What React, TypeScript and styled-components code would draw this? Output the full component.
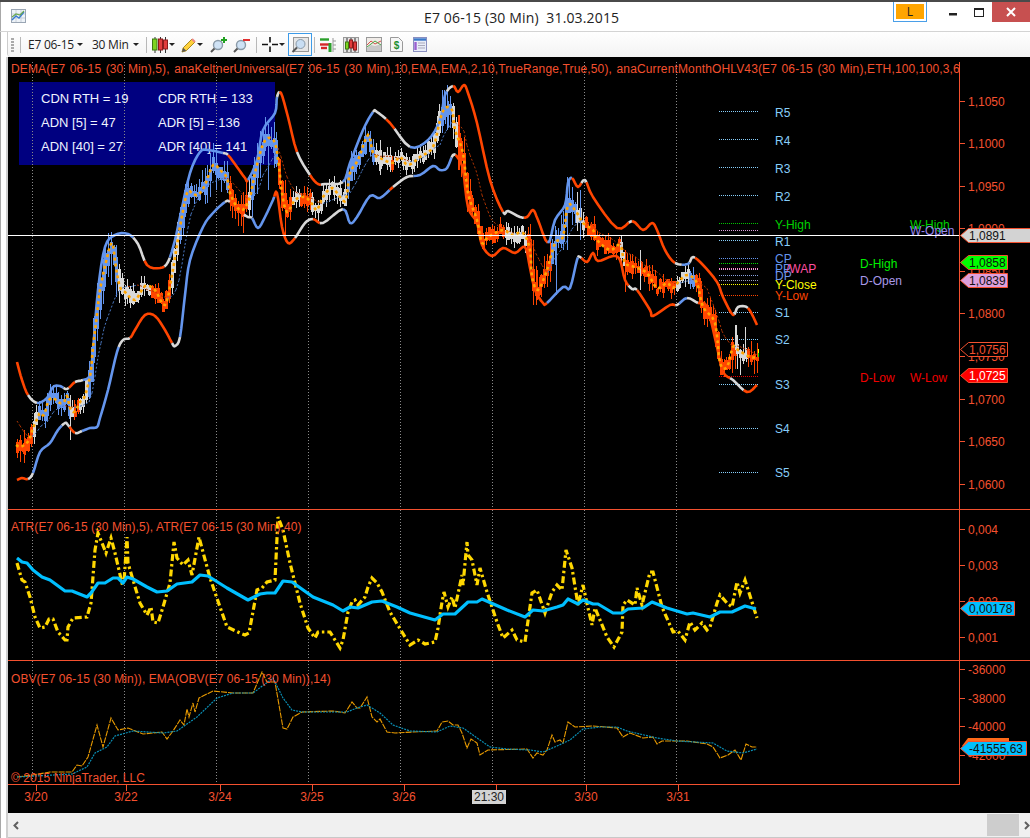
import React from "react";
import styled, { createGlobalStyle } from "styled-components";

type P = [number, number];
type C = "o" | "g" | "b";
const ORANGE = "#ff4500", BLUE = "#6495ed", GREY = "#d8d8d8";
const INK = "#f4512f";
const COL: Record<C, string> = { o: ORANGE, g: GREY, b: BLUE };

const dema: P[] = [[16,445],[20,447],[24,445],[29,440],[33,428],[38,417],[40,413],[44,415],[48,402],[52,398],[56,400],[60,403],[64,402],[67,396],[70,408],[73,412],[76,410],[80,402],[84,398],[88,385],[91,370],[93,347],[97,315],[100,290],[106,262],[112,243],[116,268],[120,287],[125,292],[135,300],[145,286],[155,290],[165,305],[172,275],[180,227],[187,193],[192,193],[198,195],[205,185],[213,165],[220,170],[227,178],[230,193],[237,207],[243,210],[250,197],[255,173],[262,147],[268,138],[275,143],[279,167],[282,193],[287,212],[295,200],[305,197],[313,205],[317,210],[323,197],[332,188],[340,197],[346,200],[350,173],[358,160],[368,135],[373,153],[380,158],[393,163],[400,157],[408,165],[420,157],[433,147],[440,120],[445,108],[452,110],[455,130],[463,153],[468,193],[477,220],[482,243],[488,237],[503,230],[512,235],[523,233],[530,250],[532,277],[538,290],[547,270],[555,243],[563,237],[568,205],[577,213],[583,223],[593,230],[597,240],[610,250],[620,245],[625,263],[635,267],[647,273],[657,288],[667,283],[673,288],[680,280],[688,275],[697,283],[703,307],[715,323],[720,363],[727,367],[733,347],[738,350],[750,357],[757,357]];
const upper: P[] = [[17,362],[22,380],[28,395],[37,403],[47,398],[53,387],[60,386],[67,389],[75,382],[83,380],[90,375],[93,350],[98,290],[105,247],[115,235],[128,234],[138,244],[147,265],[160,268],[168,262],[175,240],[180,217],[190,173],[200,152],[208,150],[223,153],[228,155],[237,167],[245,178],[248,180],[257,160],[263,130],[275,113],[277,97],[281,93],[288,117],[297,152],[310,175],[318,184],[325,184],[343,182],[350,163],[363,130],[373,112],[377,112],[390,123],[410,147],[428,140],[440,120],[445,95],[453,86],[458,92],[464,85],[468,93],[477,123],[490,180],[503,212],[508,211],[520,217],[527,217],[533,210],[538,220],[548,243],[555,220],[565,205],[568,183],[572,178],[578,187],[585,180],[593,197],[617,228],[632,221],[643,230],[652,223],[657,230],[665,250],[675,263],[688,264],[693,257],[703,265],[717,282],[723,297],[733,315],[738,307],[748,308],[757,325]];
const lower: P[] = [[17,480],[22,478],[28,479],[33,473],[40,452],[50,443],[58,430],[65,423],[68,425],[75,433],[82,431],[90,428],[97,427],[100,418],[108,390],[117,352],[123,340],[130,338],[135,330],[145,315],[155,316],[165,330],[172,343],[175,346],[180,337],[185,295],[190,260],[203,227],[213,213],[225,202],[230,202],[242,213],[248,217],[252,218],[258,228],[265,217],[273,200],[277,193],[282,227],[288,243],[295,238],[305,223],[313,219],[323,223],[343,209],[350,223],[357,217],[370,196],[380,198],[393,187],[407,177],[420,175],[433,166],[440,170],[447,168],[453,155],[458,158],[463,170],[468,207],[477,223],[482,245],[492,256],[503,248],[515,253],[525,247],[530,268],[535,290],[543,303],[547,303],[563,287],[570,288],[577,260],[580,257],[587,262],[593,253],[598,261],[613,256],[620,260],[625,280],[632,289],[637,290],[650,310],[653,316],[670,305],[677,305],[687,298],[698,303],[707,307],[717,347],[723,372],[733,380],[747,392],[757,385]];
const upCols: [number, C][] = [[29,"o"],[38,"g"],[65,"b"],[70,"g"],[75,"o"],[83,"g"],[135,"b"],[145,"g"],[165,"o"],[170,"g"],[223,"b"],[228,"g"],[248,"o"],[277,"b"],[280,"g"],[297,"o"],[312,"g"],[322,"o"],[343,"g"],[373,"b"],[388,"g"],[395,"o"],[410,"g"],[447,"b"],[453,"g"],[503,"o"],[525,"g"],[548,"o"],[573,"b"],[583,"o"],[587,"g"],[617,"o"],[620,"g"],[630,"o"],[634,"g"],[675,"o"],[685,"g"],[690,"b"],[697,"g"],[735,"o"],[750,"g"],[760,"o"]];
const loCols: [number, C][] = [[29,"o"],[34,"g"],[63,"b"],[70,"g"],[75,"o"],[82,"g"],[120,"b"],[130,"g"],[172,"o"],[180,"g"],[225,"b"],[232,"g"],[245,"o"],[252,"g"],[275,"b"],[295,"o"],[313,"g"],[320,"o"],[345,"g"],[392,"b"],[396,"o"],[415,"g"],[452,"b"],[456,"g"],[547,"o"],[578,"b"],[582,"g"],[630,"o"],[637,"g"],[676,"o"],[680,"g"],[687,"b"],[698,"g"],[732,"o"],[745,"g"],[760,"o"]];
const barCols: [number, C][] = [[31,"o"],[38,"g"],[70,"b"],[73,"g"],[78,"o"],[88,"g"],[118,"b"],[150,"g"],[170,"o"],[178,"g"],[227,"b"],[247,"o"],[250,"g"],[279,"b"],[292,"o"],[300,"g"],[310,"o"],[320,"g"],[346,"g"],[375,"b"],[390,"g"],[395,"o"],[440,"g"],[452,"b"],[456,"g"],[503,"o"],[525,"g"],[550,"o"],[575,"b"],[583,"g"],[620,"o"],[625,"g"],[675,"o"],[690,"g"],[695,"b"],[735,"o"],[748,"g"],[760,"o"]];
const atr: P[] = [[17,563],[22,580],[25,582],[30,597],[35,617],[40,628],[45,627],[49,619],[53,619],[58,632],[65,640],[67,640],[68,627],[73,618],[87,617],[91,603],[95,550],[98,533],[106,553],[111,538],[115,553],[122,583],[124,582],[127,537],[128,563],[133,580],[140,603],[147,615],[151,607],[153,622],[158,623],[163,607],[170,583],[174,542],[177,558],[183,565],[188,560],[192,575],[199,537],[203,552],[210,578],[220,607],[227,627],[240,633],[245,635],[249,633],[257,590],[262,588],[267,582],[275,580],[278,517],[283,530],[290,563],[300,603],[308,628],[315,638],[318,632],[330,632],[340,648],[343,640],[348,612],[352,602],[355,600],[358,605],[365,597],[368,587],[372,578],[377,583],[382,592],[390,612],[402,632],[410,645],[418,640],[425,644],[435,642],[438,628],[442,602],[444,592],[448,607],[452,597],[455,608],[462,575],[463,585],[467,542],[468,555],[472,560],[477,585],[480,568],[487,592],[497,622],[503,638],[512,630],[517,640],[525,642],[532,593],[537,590],[545,613],[552,592],[557,585],[562,590],[566,550],[572,568],[578,605],[583,585],[588,608],[592,625],[595,608],[607,637],[614,647],[622,632],[623,605],[627,600],[635,605],[637,588],[642,605],[650,572],[653,572],[662,607],[673,632],[678,631],[685,640],[690,622],[695,630],[702,623],[707,630],[710,627],[717,603],[720,595],[727,603],[732,607],[737,582],[740,593],[745,580],[752,602],[757,618]];
const atrAvg: P[] = [[17,558],[22,562],[27,563],[33,570],[42,577],[50,580],[65,591],[72,591],[87,597],[91,593],[98,583],[105,583],[113,578],[118,578],[123,583],[127,577],[133,579],[147,587],[157,592],[167,591],[177,584],[192,582],[200,575],[208,576],[227,588],[248,600],[260,594],[267,593],[275,593],[283,581],[292,582],[313,597],[333,605],[343,611],[350,607],[358,608],[372,602],[382,601],[397,607],[410,613],[435,620],[443,614],[455,614],[468,602],[477,602],[482,599],[507,610],[525,617],[533,610],[543,611],[557,607],[563,605],[568,599],[578,604],[583,600],[593,604],[598,604],[613,613],[622,613],[628,609],[643,608],[652,602],[667,608],[687,614],[693,613],[710,617],[720,612],[732,612],[745,606],[756,609]];
const obv: P[] = [[17,777],[33,775],[50,772],[72,772],[77,765],[82,766],[88,757],[97,725],[103,747],[111,718],[118,730],[128,728],[143,734],[162,732],[167,739],[173,731],[180,720],[184,725],[187,709],[189,717],[193,703],[195,712],[199,698],[213,691],[233,693],[253,693],[262,672],[267,682],[275,682],[283,728],[287,729],[293,717],[302,712],[333,711],[340,712],[345,713],[352,702],[357,708],[360,708],[367,697],[372,717],[377,722],[380,719],[387,732],[395,733],[413,732],[437,731],[442,722],[448,721],[453,725],[458,725],[462,733],[467,748],[471,739],[477,743],[480,755],[488,750],[527,749],[533,758],[537,753],[543,755],[547,750],[552,735],[555,742],[560,740],[563,743],[568,722],[575,727],[593,726],[617,728],[623,737],[630,733],[643,738],[653,737],[657,744],[662,741],[687,741],[707,744],[713,747],[720,758],[728,755],[735,750],[741,760],[746,744],[752,747],[757,747]];
const obvAvg: P[] = [[17,777],[72,774],[87,767],[95,753],[107,747],[115,736],[133,731],[163,733],[177,731],[197,717],[217,698],[233,693],[253,693],[273,678],[283,698],[292,710],[302,712],[347,712],[357,708],[367,705],[380,713],[393,725],[410,731],[437,732],[450,726],[463,728],[480,740],[490,747],[507,749],[530,750],[543,752],[557,746],[570,740],[583,729],[600,727],[617,727],[627,731],[657,738],[677,741],[713,743],[727,751],[743,753],[757,749]];

const pts = (a: P[]) => a.map((p) => p.join(",")).join(" ");
const interp = (a: P[], x: number) => {
  if (x <= a[0][0]) return a[0][1];
  for (let i = 1; i < a.length; i++) if (x <= a[i][0]) {
    const t = (x - a[i - 1][0]) / (a[i][0] - a[i - 1][0]);
    return a[i - 1][1] + t * (a[i][1] - a[i - 1][1]);
  }
  return a[a.length - 1][1];
};
const colorAt = (t: [number, C][], x: number): C => {
  for (const [e, c] of t) if (x <= e) return c;
  return "o";
};
const dense = (a: P[]): P[] => {
  const out: P[] = [];
  for (let i = 0; i < a.length - 1; i++) {
    const p0 = a[Math.max(0, i - 1)], p1 = a[i], p2 = a[i + 1], p3 = a[Math.min(a.length - 1, i + 2)];
    for (let k = 0; k < 4; k++) {
      const t = k / 4, t2 = t * t, t3 = t2 * t;
      out.push([
        0.5 * (2 * p1[0] + (p2[0] - p0[0]) * t + (2 * p0[0] - 5 * p1[0] + 4 * p2[0] - p3[0]) * t2 + (3 * p1[0] - p0[0] - 3 * p2[0] + p3[0]) * t3),
        0.5 * (2 * p1[1] + (p2[1] - p0[1]) * t + (2 * p0[1] - 5 * p1[1] + 4 * p2[1] - p3[1]) * t2 + (3 * p1[1] - p0[1] - 3 * p2[1] + p3[1]) * t3),
      ]);
    }
  }
  out.push(a[a.length - 1]);
  return out;
};
const runs = (a: P[], t: [number, C][]) => {
  const d = dense(a);
  const res: { c: C; p: P[] }[] = [];
  d.forEach((p, i) => {
    const c = colorAt(t, p[0]);
    const last = res[res.length - 1];
    if (last && last.c === c) last.p.push(p);
    else { res.push({ c, p: last ? [d[i - 1], p] : [p] }); }
  });
  return res;
};

let seed = 7;
const rnd = () => { seed = (seed * 16807) % 2147483647; return (seed % 1000) / 1000; };
const bars: { x: number; t: number; b: number; wt: number; wb: number; c: string; fill: boolean }[] = [];
for (let x = 17; x < 758; x += 2.76) {
  const y = interp(dema, x) + (rnd() - 0.5) * 7;
  const slope = Math.abs(interp(dema, x + 3) - interp(dema, x - 3));
  const h = 1.5 + rnd() * 4 + slope * 0.25;
  const c = COL[colorAt(barCols, x)];
  const active = (x > 95 && x < 120) || (x > 200 && x < 280) || (x > 440 && x < 470) || (x > 530 && x < 580) || x > 730;
  bars.push({
    x: Math.round(x), t: Math.round(y - h), b: Math.round(y + h),
    wt: Math.round(y - h - rnd() * (active ? 18 : 9)), wb: Math.round(y + h + rnd() * (active ? 18 : 9)),
    c, fill: rnd() > 0.45,
  });
}
const spikes: [number, number, number, C][] = [[567,177,250,"b"],[580,190,240,"b"],[735,325,350,"g"],[736,325,350,"g"],[745,327,358,"g"],[625,250,292,"o"],[447,85,130,"b"],[444,90,120,"b"],[458,115,170,"o"],[459,115,170,"o"],[20,435,462,"o"],[24,430,463,"o"],[111,235,285,"b"],[268,130,190,"b"],[285,180,240,"o"],[380,140,175,"g"],[533,240,305,"o"],[537,270,300,"o"],[70,395,440,"g"],[74,400,420,"o"],[640,250,290,"g"],[556,230,295,"b"]];

const levels: [number, string][] = [[111.5,"#87cefa"],[139.5,"#87cefa"],[167.5,"#87cefa"],[195.5,"#87cefa"],[223.5,"#00c800"],[230.5,"#dda0dd"],[240.5,"#87cefa"],[258.5,"#6495ed"],[263.5,"#00e000"],[268.5,"#ff88cc"],[269.5,"#dda0dd"],[275.5,"#87a0e0"],[280.5,"#9aa0c0"],[284.5,"#ffff00"],[295.5,"#ff4500"],[312.5,"#87cefa"],[339.5,"#87cefa"],[376.5,"#e00000"],[384.5,"#87cefa"],[428.5,"#87cefa"],[472.5,"#87cefa"]];
const labels: [string, number, number, string][] = [["R5",775,113,"#87cefa"],["R4",775,141,"#87cefa"],["R3",775,169,"#87cefa"],["R2",775,197,"#87cefa"],["Y-High",775,225,"#00d000"],["R1",775,242,"#87cefa"],["CP",775,259,"#6495ed"],["PP",775,269,"#6495ed"],["/WAP",786,269,"#ff4fa0"],["DP",775,276,"#6f95e8"],["Y-Close",775,285,"#ffff00"],["Y-Low",775,296,"#ff4500"],["S1",775,313,"#87cefa"],["S2",775,340,"#87cefa"],["S3",775,385,"#87cefa"],["S4",775,429,"#87cefa"],["S5",775,473,"#87cefa"],["D-High",860,264,"#00f000"],["D-Open",860,281,"#a898e8"],["D-Low",860,378,"#f00000"],["W-Low",910,378,"#f00000"],["W-High",910,225,"#00d000"],["W-Open",910,231,"#9a88f0"]];
const gridX = [32.5, 124.5, 216.5, 308.5, 400.5, 492.5, 584.5, 676.5];
const priceTicks: [string, number][] = [["1,1050",101],["1,1000",143],["1,0950",186],["1,0900",228],["1,0850",271],["1,0800",313],["1,0750",356],["1,0700",399],["1,0650",441],["1,0600",484]];
const atrTicks: [string, number][] = [["0,004",529],["0,003",565],["0,002",601],["0,001",637]];
const obvTicks: [string, number][] = [["-36000",669],["-38000",698],["-40000",726],["-42000",755]];
const dates: [string, number][] = [["3/20",36],["3/22",126],["3/24",220],["3/25",312],["3/26",404],["3/30",586],["3/31",678]];
const tickTimes = [36,126,220,312,404,496,586,678];

const Global = createGlobalStyle`
  html, body { margin: 0; padding: 0; background: #fff; overflow: hidden; }
`;
const Win = styled.div`
  width: 1030px; height: 838px; display: flex; flex-direction: column; overflow: hidden;
  background: #fff; border-top: 2px solid #4a4a4a; box-sizing: border-box; box-shadow: inset 1px 0 0 #a8a8a8;
  font-family: "Liberation Sans", Arial, sans-serif;
`;
const TitleBar = styled.div`
  height: 29px; display: flex; align-items: flex-start; position: relative; flex: none;
  border-bottom: 1px solid #d4d4d4;
`;
const AppIcon = styled.svg`margin: 7px 0 0 11px; width: 15px; height: 14px;`;
const Title = styled.div`
  position: absolute; left: 424px; top: 6px; font: 14px "Open Sans", sans-serif; color: #222; white-space: pre; letter-spacing: 0.15px;
`;
const TitleRight = styled.div`margin-left: auto; display: flex; align-items: flex-start;`;
const LinkOuter = styled.div`
  width: 34px; height: 20px; margin-right: 13px; box-sizing: border-box; border: 1px solid #4a9fe8; border-top: none;
  padding: 2px 2px 2px; display: flex;
`;
const LinkBtn = styled.div`
  flex: 1; background: #ffa500; color: #222; font: 12px "Open Sans", sans-serif; text-align: center; line-height: 15px;
`;
const WinBtn = styled.div`
  width: ${(p: { $w: number }) => p.$w}px; height: 20px; display: flex; align-items: center; justify-content: center;
`;
const CloseBtn = styled(WinBtn)`background: #c75050;`;
const Toolbar = styled.div`
  height: 25px; flex: none; display: flex; align-items: center; margin-left: 8px;
  background: linear-gradient(#fff, #f3f3f3); border-bottom-left-radius: 4px; box-shadow: -1px 0 0 #ccc;
  font: 12px "Open Sans", sans-serif; color: #222; box-sizing: border-box;
`;
const Gripper = styled.div`
  width: 3px; height: 14px; margin-left: 3px;
  background: repeating-linear-gradient(#aaa 0 2px, transparent 2px 3px);
`;
const Sep = styled.div<{ $ml: number }>`width: 1px; height: 16px; background: #b8b8b8; margin-left: ${(p) => p.$ml}px; flex: none;`;
const DropText = styled.span<{ $ml: number; $w: number }>`margin-left: ${(p) => p.$ml}px; width: ${(p) => p.$w}px; letter-spacing: -0.25px; white-space: nowrap; flex: none;`;
const Caret = styled.i<{ $ml: number }>`
  margin-left: ${(p) => p.$ml}px; width: 0; height: 0; border: 3px solid transparent; border-top: 3px solid #222; border-bottom: none; display: block; flex: none;
`;
const Tool = styled.svg<{ $ml: number }>`margin-left: ${(p) => p.$ml}px; flex: none; display: block;`;
const Selected = styled.div`
  margin-left: 3px; width: 24px; height: 23px; box-sizing: border-box; border: 1px solid #3d9be8; display: flex; align-items: center; justify-content: center; flex: none;
`;
const Chart = styled.div`flex: 1; display: flex; flex-direction: column; margin-left: 8px; background: #000; position: relative; box-shadow: -2px 0 0 #cfcfcf;`;
const Pane = styled.div<{ $h: number; $line?: boolean }>`
  position: relative; height: ${(p) => p.$h}px; flex: none; box-sizing: border-box;
  ${(p) => (p.$line ? `border-bottom: 1px solid ${INK};` : "")}
`;
const Plot = styled.svg`position: absolute; left: 0; top: 0; display: block; width: 100%; height: 100%;`;
const Legend = styled.div<{ $top: number; $wide?: boolean }>`
  position: absolute; left: 3px; top: ${(p) => p.$top}px; color: ${INK}; font: 12px "Liberation Sans", Arial, sans-serif;
  white-space: pre; line-height: 14px; z-index: 2;
  word-spacing: ${(p) => (p.$wide ? 1 : 0)}px; letter-spacing: ${(p) => (p.$wide ? 0.14 : 0.07)}px;
`;
const InfoPanel = styled.div`
  position: absolute; left: 11px; top: 25px; width: 256px; height: 83px; box-sizing: border-box; background: #000080; color: #eef2ff;
  font: 13px "Liberation Sans", Arial, sans-serif; padding: 9px 0 0 22px;
  display: grid; grid-template-columns: 117px 1fr; grid-auto-rows: 24px; white-space: pre;
`;
const Scroll = styled.div`
  height: 25px; flex: none; margin-left: 8px; background: #f0f0f0; border-bottom: 1px solid #c8c8c8; box-sizing: border-box;
  display: flex; align-items: center; box-shadow: -2px 0 0 #cfcfcf;
`;
const Thumb = styled.div`margin-left: 968px; width: 32px; height: 22px; background: #cdcdcd;`;
const Arrow = styled.svg<{ $ml: number }>`margin-left: ${(p) => p.$ml}px; width: 6px; height: 9px; flex: none;`;
const AxisText = styled.text`font: 12px "Liberation Sans", Arial, sans-serif; fill: ${INK};`;
const MarkText = styled.text<{ $fill: string }>`font: 12px "Liberation Sans", Arial, sans-serif; fill: ${(p) => p.$fill};`;
const LevelText = styled.text<{ $c: string }>`font: 12px "Liberation Sans", Arial, sans-serif; fill: ${(p) => p.$c}; dominant-baseline: central;`;

const Grid = ({ y1, y2 }: { y1: number; y2: number }) => (
  <g stroke="#8a8a8a" strokeWidth={1} strokeDasharray="1 2">
    {gridX.map((x) => <line key={x} x1={x} x2={x} y1={y1} y2={y2} />)}
  </g>
);
const Ticks = ({ t }: { t: [string, number][] }) => (
  <>
    {t.map(([s, y]) => (
      <g key={s}>
        <line x1={959} x2={965} y1={y + 0.5} y2={y + 0.5} stroke={INK} />
        <AxisText x={968} y={y + 5}>{s}</AxisText>
      </g>
    ))}
  </>
);
const Mark = ({ y, h, r, fill, stroke, text, tc }: { y: number; h: number; r: number; fill: string; stroke: string; text: string; tc: string }) => (
  <g>
    <polygon points={`960.5,${y + h / 2} 968.5,${y + 0.5} ${r},${y + 0.5} ${r},${y + h - 0.5} 968.5,${y + h - 0.5}`} fill={fill} stroke={stroke} />
    <MarkText $fill={tc} x={969} y={y + h / 2 + 4.5}>{text}</MarkText>
  </g>
);

const Band = ({ a, t }: { a: P[]; t: [number, C][] }) => (
  <g fill="none" strokeWidth={2.6} strokeLinejoin="round">
    {runs(a, t).map((r, i) => <polyline key={i} points={pts(r.p)} stroke={COL[r.c]} />)}
  </g>
);
const mid: { p: P[]; up: boolean }[] = [];
for (let x = 17; x < 757; x += 3) {
  const y = (interp(upper, x) + interp(lower, x)) / 2;
  const y2 = (interp(upper, x + 3) + interp(lower, x + 3)) / 2;
  mid.push({ p: [[x, y], [x + 3, y2]], up: y2 < y });
}

const PriceChart = () => (
  <Plot viewBox="8 57 1022 452">
    <Grid y1={62} y2={509} />
    <line x1={959.5} x2={959.5} y1={62} y2={509} stroke={INK} />
    <g strokeWidth={1} strokeDasharray="1 1" shapeRendering="crispEdges">
      {levels.map(([y, c]) => <line key={y} x1={719} x2={758} y1={y} y2={y} stroke={c} />)}
    </g>
    {labels.map(([s, x, y, c]) => <LevelText key={s + x} $c={c} x={x} y={y - 0.5}>{s}</LevelText>)}
    <g shapeRendering="crispEdges">
      {bars.map((b, i) => (
        <g key={i} stroke={b.c}>
          <line x1={b.x + 0.5} x2={b.x + 0.5} y1={b.wt} y2={b.wb} />
          <rect x={b.x - 0.5} y={b.t + 0.5} width={2} height={Math.max(1, b.b - b.t)} fill={b.fill ? b.c : "none"} strokeWidth={1} />
        </g>
      ))}
      {spikes.map(([x, a, c2, c], i) => <line key={i} x1={x + 0.5} x2={x + 0.5} y1={a} y2={c2} stroke={COL[c]} />)}
    </g>
    <g fill="none" strokeWidth={1} strokeDasharray="2 2">
      {mid.map((m, i) => <polyline key={i} points={pts(m.p)} stroke={m.up ? "#4a78c0" : "#b03400"} />)}
    </g>
    <Band a={upper} t={upCols} />
    <Band a={lower} t={loCols} />
    <polyline points={pts(dense(dema))} fill="none" stroke="#ffa500" strokeWidth={2.6} strokeDasharray="3 3" />
    <line x1={758.5} x2={758.5} y1={349} y2={353} stroke="#ffff00" />
    <line x1={758.5} x2={758.5} y1={353} y2={357} stroke="#00e000" />
    <line x1={8} x2={959} y1={235.5} y2={235.5} stroke="#fff" />
    <Ticks t={priceTicks} />
    <Mark y={228} h={15} r={1031} fill="#d3d3d3" stroke={INK} text="1,0891" tc="#111" />
    <Mark y={255} h={15} r={1007.5} fill="#00ff00" stroke={INK} text="1,0858" tc="#111" />
    <Mark y={273} h={15} r={1007.5} fill="#dda0dd" stroke={INK} text="1,0839" tc="#111" />
    <Mark y={342} h={15} r={1007.5} fill="#000" stroke={INK} text="1,0756" tc={INK} />
    <Mark y={368} h={15} r={1007.5} fill="#ff0000" stroke={INK} text="1,0725" tc="#fff" />
  </Plot>
);
const AtrChart = () => (
  <Plot viewBox="8 510 1022 150">
    <Grid y1={510} y2={660} />
    <line x1={959.5} x2={959.5} y1={510} y2={660} stroke={INK} />
    <polyline points={pts(atr)} fill="none" stroke="#ffd700" strokeWidth={3.2} strokeDasharray="7 3 2.5 3" />
    <polyline points={pts(atrAvg)} fill="none" stroke="#00bfff" strokeWidth={3.2} strokeLinejoin="round" />
    <Ticks t={atrTicks} />
    <Mark y={601} h={15} r={1014.5} fill="#00bfff" stroke={INK} text="0,00178" tc="#111" />
  </Plot>
);
const ObvChart = () => (
  <Plot viewBox="8 661 1022 123">
    <Grid y1={661} y2={782} />
    <line x1={959.5} x2={959.5} y1={661} y2={784} stroke={INK} />
    <polyline points={pts(obv)} fill="none" stroke="#e89a00" strokeWidth={1.1} strokeDasharray="6 1" />
    <polyline points={pts(obvAvg)} fill="none" stroke="#0a8fb5" strokeWidth={1.2} strokeDasharray="2 1" />
    <Ticks t={obvTicks} />
    <polygon points="962,746 968,738 1009,738 1009,746" fill="#ff6a1a" />
    <Mark y={741} h={15} r={1026.5} fill="#00bfff" stroke={INK} text="-41555,63" tc="#111" />
  </Plot>
);
const TimeChart = () => (
  <Plot viewBox="8 784 1022 29">
    <line x1={8} x2={960} y1={784.5} y2={784.5} stroke={INK} />
    {tickTimes.map((x) => <line key={x} x1={x + 0.5} x2={x + 0.5} y1={785} y2={791} stroke={INK} />)}
    {dates.map(([s, x]) => <AxisText key={s} x={x} y={801} textAnchor="middle">{s}</AxisText>)}
    <rect x={472} y={790} width={34} height={14} fill="#d3d3d3" />
    <MarkText $fill="#222" x={474} y={801}>21:30</MarkText>
  </Plot>
);

const ChartGlyph = () => (
  <AppIcon viewBox="0 0 15 14">
    <rect x="0.5" y="0.5" width="14" height="13" fill="#eef3f8" stroke="#9aa6b4" />
    <path d="M1 5h13M1 9h13M5 1v12M10 1v12" stroke="#c8d0da" />
    <polyline points="1,11 5,7 8,9 13,3" fill="none" stroke="#3a7bd0" strokeWidth="1.4" />
    <polyline points="1,8 5,5 9,6 13,2" fill="none" stroke="#6aa84f" strokeWidth="1.2" />
  </AppIcon>
);
const Candles = () => (
  <Tool $ml={5} width={16} height={16} viewBox="0 0 16 16">
    <path d="M3 0v16M8.5 0v16M13.5 0v16" stroke="#333" />
    <rect x="0.5" y="2" width="4.5" height="11" fill="#7ed321" stroke="#3c7a10" />
    <rect x="6.5" y="2" width="4" height="11" fill="#e23b3b" stroke="#8a1a1a" />
    <rect x="11.5" y="3" width="4" height="9" fill="#e23b3b" stroke="#8a1a1a" />
  </Tool>
);
const Pencil = () => (
  <Tool $ml={6} width={15} height={16} viewBox="0 0 15 16">
    <path d="M1 15l1.2-4.2L11 2l3 3-8.8 8.8z" fill="#ffd23c" stroke="#a88a20" />
    <path d="M1 15l1.2-4.2 3 3z" fill="#555" />
    <path d="M11 2l3 3" stroke="#e88" strokeWidth="2" />
  </Tool>
);
const Magnifier = ({ ml, sign }: { ml: number; sign: "+" | "-" }) => (
  <Tool $ml={ml} width={18} height={16} viewBox="0 0 18 16">
    <circle cx="8" cy="8" r="4.5" fill="#cfe2f5" stroke="#8a9aa8" strokeWidth="1.4" />
    <path d="M4.5 11.5L1 15" stroke="#555" strokeWidth="2" />
    {sign === "+" ? <path d="M14 0v6M11 3h6" stroke="#20a020" strokeWidth="2" /> : <path d="M10 3h7" stroke="#e03030" strokeWidth="2" />}
  </Tool>
);
const Crosshair = () => (
  <Tool $ml={5} width={16} height={15} viewBox="0 0 16 15">
    <path d="M0 7.5h6M10 7.5h6M8 0v5.5M8 9.5V15" stroke="#111" strokeWidth="1.6" />
  </Tool>
);
const SelectIcon = () => (
  <svg width={18} height={16} viewBox="0 0 18 16">
    <rect x="2.5" y="0.5" width="15" height="14" fill="#e6e6e6" stroke="#999" />
    <circle cx="9.5" cy="7" r="4.5" fill="#c9def3" stroke="#8a9aa8" />
    <path d="M6 10.5L1.5 15" stroke="#555" strokeWidth="2" />
  </svg>
);
const BarsIcon = () => (
  <Tool $ml={5} width={16} height={16} viewBox="0 0 16 16">
    <path d="M0 2.5h9" stroke="#2ca02c" strokeWidth="2.4" /><path d="M0 7.5h9" stroke="#d62728" strokeWidth="2.4" />
    <path d="M10 15V6" stroke="#2ca02c" strokeWidth="3" /><path d="M1 11h6" stroke="#d62728" strokeWidth="2.4" />
    <path d="M13 1v14" stroke="#999" /><path d="M13 4h3M13 8h3M13 12h3" stroke="#999" />
  </Tool>
);
const FramedCandles = () => (
  <Tool $ml={7} width={16} height={16} viewBox="0 0 16 16">
    <rect x="0.5" y="0.5" width="15" height="15" fill="#e4e4e4" stroke="#999" />
    <path d="M4 1v14M8 1v14M12 1v14" stroke="#333" />
    <rect x="2.5" y="5" width="3" height="7" fill="#7ed321" stroke="#3c7a10" />
    <rect x="6.5" y="3" width="3" height="8" fill="#e23b3b" stroke="#8a1a1a" />
    <rect x="10.5" y="5" width="3" height="8" fill="#e23b3b" stroke="#8a1a1a" />
  </Tool>
);
const LineIcon = () => (
  <Tool $ml={7} width={16} height={15} viewBox="0 0 16 15">
    <rect x="0.5" y="0.5" width="15" height="14" fill="#f0ece8" stroke="#999" />
    <path d="M1 11l4-3 4 1 6-2v7H1z" fill="#c8c8c8" />
    <polyline points="1,8 5,4 9,7 15,4" fill="none" stroke="#d8504a" />
    <polyline points="1,10 5,7 9,4 15,8" fill="none" stroke="#4aa84a" />
  </Tool>
);
const DollarIcon = () => (
  <Tool $ml={8} width={13} height={15} viewBox="0 0 13 15">
    <path d="M0.5 0.5h8l4 4v10h-12z" fill="#f6f6f6" stroke="#999" />
    <text x="6.5" y="12" textAnchor="middle" fontFamily="Liberation Sans" fontWeight="bold" fontSize="10" fill="#1f8f2f">$</text>
  </Tool>
);
const FormIcon = () => (
  <Tool $ml={10} width={14} height={15} viewBox="0 0 14 15">
    <rect x="0.5" y="0.5" width="13" height="14" fill="#e8ecf8" stroke="#8a8fc0" />
    <path d="M1 2.5h12" stroke="#3a78c8" strokeWidth="2.4" />
    <path d="M2.5 5v8" stroke="#9a60d0" strokeWidth="2.4" />
    <path d="M5 6h7M5 8.5h7M5 11h7" stroke="#aab" />
  </Tool>
);

export default function App() {
  return (
    <Win>
      <Global />
      <TitleBar>
        <ChartGlyph />
        <Title>{"E7 06-15 (30 Min)  31.03.2015"}</Title>
        <TitleRight>
          <LinkOuter><LinkBtn>L</LinkBtn></LinkOuter>
          <WinBtn $w={26}><svg width="8" height="8"><rect width="8" height="2.5" y="5" fill="#222" /></svg></WinBtn>
          <WinBtn $w={26}><svg width="11" height="9"><rect x="0.5" y="0.5" width="9" height="8" fill="none" stroke="#222" /><rect width="10" height="2" fill="#222" /></svg></WinBtn>
          <CloseBtn $w={38}><svg width="10" height="10"><path d="M1 1l8 8M9 1l-8 8" stroke="#fff" strokeWidth="2" /></svg></CloseBtn>
        </TitleRight>
      </TitleBar>
      <Toolbar>
        <Gripper />
        <Sep $ml={6} />
        <DropText $ml={7} $w={46}>E7 06-15</DropText>
        <Caret $ml={3} />
        <DropText $ml={9} $w={37}>30 Min</DropText>
        <Caret $ml={4} />
        <Sep $ml={7} />
        <Candles />
        <Caret $ml={1} />
        <Pencil />
        <Caret $ml={1} />
        <Magnifier ml={7} sign="+" />
        <Magnifier ml={5} sign="-" />
        <Sep $ml={5} />
        <Crosshair />
        <Caret $ml={1} />
        <Selected><SelectIcon /></Selected>
        <Sep $ml={2} />
        <BarsIcon />
        <FramedCandles />
        <LineIcon />
        <DollarIcon />
        <FormIcon />
      </Toolbar>
      <Chart>
        <Pane $h={453} $line>
          <InfoPanel>
            <span>CDN RTH = 19</span><span>CDR RTH = 133</span>
            <span>ADN [5] = 47</span><span>ADR [5] = 136</span>
            <span>ADN [40] = 27</span><span>ADR [40] = 141</span>
          </InfoPanel>
          <PriceChart />
          <Legend $top={5} $wide>DEMA(E7 06-15 (30 Min),5), anaKeltnerUniversal(E7 06-15 (30 Min),10,EMA,EMA,2,10,TrueRange,True,50), anaCurrentMonthOHLV43(E7 06-15 (30 Min),ETH,100,100,3,6</Legend>
        </Pane>
        <Pane $h={151} $line>
          <AtrChart />
          <Legend $top={10}>ATR(E7 06-15 (30 Min),5), ATR(E7 06-15 (30 Min),40)</Legend>
        </Pane>
        <Pane $h={123}>
          <ObvChart />
          <Legend $top={11}>OBV(E7 06-15 (30 Min)), EMA(OBV(E7 06-15 (30 Min)),14)</Legend>
          <Legend $top={110}>© 2015 NinjaTrader, LLC</Legend>
        </Pane>
        <Pane $h={29}>
          <TimeChart />
        </Pane>
      </Chart>
      <Scroll>
        <Arrow $ml={5} viewBox="0 0 6 9"><path d="M5 1L1.5 4.5 5 8" fill="none" stroke="#606060" strokeWidth="2" /></Arrow>
        <Thumb />
        <Arrow $ml={5} viewBox="0 0 6 9"><path d="M1 1l3.5 3.5L1 8" fill="none" stroke="#606060" strokeWidth="2" /></Arrow>
      </Scroll>
    </Win>
  );
}
